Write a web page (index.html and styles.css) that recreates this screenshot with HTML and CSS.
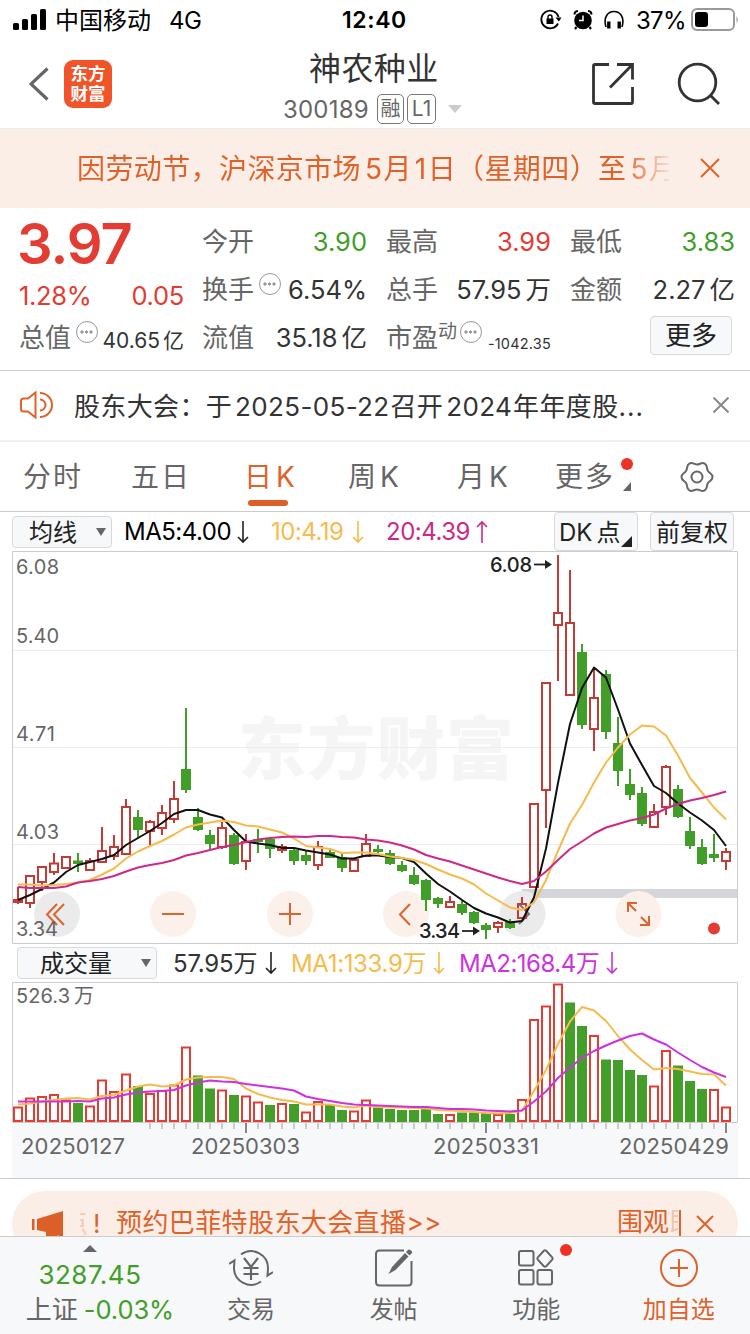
FILE: index.html
```html
<!DOCTYPE html>
<html lang="zh-CN">
<head>
  <meta charset="utf-8">
  <title>神农种业 300189</title>
  <link rel="stylesheet" href="styles.css">
</head>
<body>
  <!-- Status bar -->
  <div class="status-bar">
    <svg class="signal" width="34" height="22" viewBox="0 0 34 22">
      <rect x="0" y="14" width="6" height="7" rx="1.5"/>
      <rect x="9" y="10" width="6" height="11" rx="1.5"/>
      <rect x="18" y="5" width="6" height="16" rx="1.5"/>
      <rect x="27" y="0" width="6" height="21" rx="1.5"/>
    </svg>
    <span class="carrier">中国移动</span>
    <span class="network">4G</span>
    <span class="clock">12:40</span>
    <div class="status-icons">
      <svg width="22" height="22" viewBox="0 0 22 22" fill="none" stroke="#000" stroke-width="1.8">
        <path d="M18 14.5A8.8 8.8 0 1 1 18.6 8"/>
        <path d="M15.5 8.5h6l-2.6 4z" fill="#000" stroke="none"/>
        <rect x="6.5" y="9.5" width="7" height="5.5" fill="#000" stroke="none"/>
        <path d="M8 10V8a2 2 0 0 1 4 0v2" stroke-width="1.4"/>
      </svg>
      <svg width="20" height="22" viewBox="0 0 20 22">
        <circle cx="10" cy="11.5" r="8.8"/>
        <path d="M1.800 5.500Q1 2.500 5 2M18.200 5.500Q19 2.500 15 2M3.500 18L2 20M16.500 18L18 20" fill="none" stroke="#000" stroke-width="2.2"/>
        <path d="M10 6.500V11.500H6" fill="none" stroke="#fff" stroke-width="1.500"/>
      </svg>
      <svg width="20" height="20" viewBox="0 0 20 20" fill="none" stroke="#000">
        <path d="M2 17C-1 7 4 1.500 10 1.500S21 7 18 17" stroke-width="1.600"/>
        <path d="M4.800 11.500v7M15.200 11.500v7" stroke-width="3.400"/>
      </svg>
    </div>
    <span class="battery-text">37%</span>
    <svg class="battery" width="48" height="24" viewBox="0 0 48 24">
      <rect x="1" y="1" width="42" height="21" rx="5" fill="none" stroke="#999" stroke-width="2"/>
      <rect x="4" y="4" width="13" height="15" rx="3"/>
      <path d="M45.500 8q2.500 3.500 0 7z" fill="#999"/>
    </svg>
  </div>

  <!-- Header -->
  <header class="header">
    <svg class="back" width="20" height="34" viewBox="0 0 20 34"><path d="M18.500 1.500L2 17l16.500 15.500" fill="none" stroke="#666" stroke-width="3.200"/></svg>
    <div class="logo"><span>东方</span><span>财富</span></div>
    <div class="stock">
      <h1 class="stock-name">神农种业</h1>
      <div class="stock-sub">
        <span class="stock-code">300189</span>
        <span class="tag">融</span>
        <span class="tag tag-level">L1</span>
        <i class="caret"></i>
      </div>
    </div>
    <svg class="share" width="44" height="44" viewBox="0 0 44 44" fill="none" stroke="#333" stroke-width="2.800">
      <path d="M18 2.500H4Q2.500 2.500 2.500 4V40Q2.500 41.500 4 41.500H40Q41.500 41.500 41.500 40V25M26 2.500H41.500V17.500M41 3L19 25.500"/>
    </svg>
    <svg class="search" width="44" height="44" viewBox="0 0 44 44" fill="none" stroke="#333" stroke-width="2.800">
      <circle cx="20.500" cy="20.500" r="18.300"/><path d="M33.500 33.500L42 42"/>
    </svg>
  </header>

  <!-- Holiday banner -->
  <div class="banner">
    <p class="banner-text">因劳动节，沪深京市场<b>5</b>月<b class="one">1</b>日（星期四）至<b>5</b>月</p>
    <svg class="banner-close" width="20" height="20" viewBox="0 0 20 20"><path d="M1 1l18 18M19 1L1 19" stroke="#e0622a" stroke-width="2"/></svg>
  </div>

  <!-- Quote -->
  <section class="quote">
    <div class="quote-main">
      <div class="price up">3.97</div>
      <div class="change up"><span>1.28%</span><span>0.05</span></div>
      <div class="cell"><span class="label">总值</span><i class="more-dot"></i><span class="value small">40.65<em>亿</em></span></div>
    </div>
    <div class="quote-grid">
      <div class="cell"><span class="label">今开</span><span class="value down">3.90</span></div>
      <div class="cell"><span class="label">最高</span><span class="value up">3.99</span></div>
      <div class="cell"><span class="label">最低</span><span class="value down">3.83</span></div>
      <div class="cell"><span class="label">换手</span><i class="more-dot"></i><span class="value">6.54%</span></div>
      <div class="cell"><span class="label">总手</span><span class="value">57.95<em>万</em></span></div>
      <div class="cell"><span class="label">金额</span><span class="value">2.27<em>亿</em></span></div>
      <div class="cell"><span class="label">流值</span><span class="value">35.18<em>亿</em></span></div>
      <div class="cell"><span class="label">市盈<sup>动</sup></span><i class="more-dot pe-dot"></i><span class="value tiny">-1042.35</span></div>
      <div class="cell cell-btn"><button class="btn btn-more">更多</button></div>
    </div>
  </section>

  <!-- Notice -->
  <div class="notice">
    <svg width="35" height="28" viewBox="0 0 35 28" fill="none" stroke="#e0622a" stroke-width="2">
      <path d="M16.500 1.500V26.500L9 20.500H4.500Q2 20.500 2 18V10Q2 7.500 4.500 7.500H9ZM21 8.500a5.500 5.500 0 0 1 0 11M21 2a12 12 0 0 1 0 24"/>
    </svg>
    <p class="notice-text">股东大会：于<b>2025-05-22</b>召开<b>2024</b>年年度股<span class="dots">...</span></p>
    <svg class="notice-close" width="16" height="16" viewBox="0 0 16 16"><path d="M.5.5l15 15M15.500.5l-15 15" stroke="#888" stroke-width="2"/></svg>
  </div>

  <!-- Period tabs -->
  <nav class="tabs">
    <span class="tab">分时</span>
    <span class="tab">五日</span>
    <span class="tab active">日<b>K</b></span>
    <span class="tab">周<b>K</b></span>
    <span class="tab">月<b>K</b></span>
    <span class="tab tab-more">更多</span>
    <svg width="34" height="32" viewBox="0 0 34 32" fill="none" stroke="#666" stroke-width="2">
      <path d="M32.500 16C32.500 19.500 29.300 19.700 27.800 22.300S27.700 27.600 24.700 29.400S20 28.500 17 28.500S12.300 31.100 9.300 29.400S7.700 24.900 6.200 22.300S1.500 19.500 1.500 16S4.700 12.300 6.200 9.700S6.300 4.400 9.300 2.600S14 3.500 17 3.500S21.700.9 24.700 2.600S26.300 7.100 27.800 9.700S32.500 12.500 32.500 16Z"/>
      <circle cx="17" cy="16" r="5.500"/>
    </svg>
  </nav>

  <!-- Moving averages -->
  <div class="toolbar">
    <button class="btn select">均线<i></i></button>
    <span class="ma ma5">MA5:4.00</span><svg class="arrow" viewBox="0 0 12 24"><path d="M6 1v21M1 17l5 5 5-5"/></svg>
    <span class="ma ma10">10:4.19</span><svg class="arrow ma10" viewBox="0 0 12 24"><path d="M6 1v21M1 17l5 5 5-5"/></svg>
    <span class="ma ma20">20:4.39</span><svg class="arrow ma20" viewBox="0 0 12 24"><path d="M6 23V2M1 7l5-5 5 5"/></svg>
    <button class="btn tool tool-dk"><b>DK</b>点</button>
    <button class="btn tool tool-fq">前复权</button>
  </div>

  <svg class="chart" id="kline" width="726" height="393" viewBox="12 551 726 393">
    <text class="watermark" x="238" y="774" textLength="276">东方财富</text>
    <path class="grid" d="M12 650.500H738M12 747.500H738M12 844.500H738"/>
    <rect x="522" y="889" width="216" height="9" fill="#d5d6db"/>
    <g class="pads">
      <circle class="gray" cx="57" cy="914" r="23"/>
      <circle cx="173" cy="914" r="23"/>
      <circle cx="290" cy="914" r="23"/>
      <circle cx="406" cy="914" r="23"/>
      <circle class="gray" cx="522.500" cy="914" r="23"/>
      <circle cx="638.500" cy="914" r="23"/>
    </g>
    <g class="pad-icons">
      <path d="M57 904L47 914.500L57 925M64 904L54 914.500L64 925M162 914H184M279 914H301M290 903V925M410 904L400 914.500L410 925"/>
      <path d="M637 903H628V912M628.500 903.500L636 911M640 925H649V916M648.500 924.500L641 917"/>
      <path class="dim" d="M519 904L529 914L519 924"/>
    </g>
    <g id="candles"></g>
    <g class="axis-y">
      <text x="16" y="574" textLength="43">6.08</text>
      <text x="16" y="643" textLength="43">5.40</text>
      <text x="16" y="741" textLength="39">4.71</text>
      <text x="16" y="839" textLength="43">4.03</text>
      <text x="16" y="936" textLength="42">3.34</text>
    </g>
    <g class="mark">
      <text x="490" y="572" textLength="42">6.08</text>
      <path d="M534 564.500H550"/><path class="tip" d="M545 560L552 564.500L545 569Z"/>
      <text x="419" y="938" textLength="41">3.34</text>
      <path d="M462 931H478"/><path class="tip" d="M473 926.500L480 931L473 935.500Z"/>
    </g>
    <circle cx="714" cy="928.500" r="6" fill="#e33c32"/>
    <path class="frame" d="M12.500 943.500V551.500H737.500V943.500Z"/>
  </svg>

  <!-- Volume -->
  <div class="toolbar toolbar-vol">
    <button class="btn select select-vol">成交量<i></i></button>
    <span class="ma vol">57.95万</span><svg class="arrow" viewBox="0 0 12 24"><path d="M6 1v21M1 17l5 5 5-5"/></svg>
    <span class="ma vol1">MA1:133.9万</span><svg class="arrow ma10" viewBox="0 0 12 24"><path d="M6 1v21M1 17l5 5 5-5"/></svg>
    <span class="ma vol2">MA2:168.4万</span><svg class="arrow vol2" viewBox="0 0 12 24"><path d="M6 1v21M1 17l5 5 5-5"/></svg>
  </div>

  <svg class="chart" id="volume" width="726" height="196" viewBox="12 982 726 196">
    <rect x="12" y="1122" width="726" height="56" fill="#f7f8fa"/>
    <g id="bars"></g>
    <g class="axis-y">
      <text x="16" y="1003" textLength="54">526.3</text>
      <text x="74" y="1003">万</text>
    </g>
    <path class="frame" d="M12.500 1122.500V982.500H737.500V1122.500Z"/>
    <g id="ticks"></g>
    <g class="axis-x">
      <text x="21" y="1154" textLength="104">20250127</text>
      <text x="191" y="1154" textLength="109">20250303</text>
      <text x="433" y="1154" textLength="106">20250331</text>
      <text x="619" y="1154" textLength="110">20250429</text>
    </g>
  </svg>

  <!-- Promo strip, cut off by the bottom bar -->
  <div class="promo-wrap">
    <div class="promo">
      <svg width="32" height="28" viewBox="0 0 32 28" fill="#dc5f28">
        <path d="M0 9h2.500v11H0zM5 9L31 1V27L26 25.500Q22 28 14 26V22L5 20Z"/>
      </svg>
      <span class="promo-prev">点</span>
      <span class="promo-mark">!</span>
      <span class="promo-text">预约巴菲特股东大会直播<b>&gt;&gt;</b></span>
      <span class="promo-link">围观<i>即</i></span>
      <svg class="promo-close" width="18" height="18" viewBox="0 0 18 18"><path d="M1 1l16 16M17 1L1 17" stroke="#e0622a" stroke-width="2"/></svg>
    </div>
  </div>

  <!-- Bottom bar -->
  <footer class="bottom-bar">
    <div class="index">
      <i class="caret-up"></i>
      <div class="index-value">3287.45</div>
      <div class="index-row">上证<b>-0.03%</b></div>
    </div>
    <div class="action">
      <svg width="44" height="40" viewBox="0 0 44 40" fill="none" stroke="#666" stroke-width="2">
        <path d="M12 6.500A17 17 0 0 1 39 20.500L38.500 27.500L44 24M32 33.500A17 17 0 0 1 5 19.500L5.500 12.500L0 16"/>
        <path d="M15 10l7 9 7-9M22 19v13M14.500 20h15M14.500 26h15" stroke-width="2.200"/>
      </svg>
      <span>交易</span>
    </div>
    <div class="action">
      <svg width="40" height="40" viewBox="0 0 40 40" fill="none" stroke="#666" stroke-width="2">
        <path d="M30 2.500H5.500Q2 2.500 2 6V34Q2 37.500 5.500 37.500H34Q37.500 37.500 37.500 34V13"/>
        <path d="M14.500 26L18 19L31 5L34.500 8.500L21.500 22Z" fill="#666" stroke="none"/>
        <path d="M32 4L34.500 1.500Q38.500 2 38 5L35.500 7.500Z" fill="#666" stroke="none"/>
      </svg>
      <span>发帖</span>
    </div>
    <div class="action action-fn">
      <svg width="40" height="40" viewBox="0 0 40 40" fill="none" stroke="#666" stroke-width="2">
        <rect x="3" y="3" width="14.500" height="14.500" rx="2"/>
        <rect x="3" y="22" width="14.500" height="14.500" rx="2"/>
        <rect x="21.500" y="22" width="14.500" height="14.500" rx="2"/>
        <path d="M27.800 2.800Q29 1.800 30.200 2.800L36.200 9.300Q37.200 10.500 36.200 11.700L30.200 18.200Q29 19.200 27.800 18.200L21.800 11.700Q20.800 10.500 21.800 9.300Z"/>
      </svg>
      <span>功能</span>
    </div>
    <div class="action action-add">
      <svg width="40" height="40" viewBox="0 0 40 40" fill="none" stroke="#e0622a" stroke-width="2">
        <circle cx="20" cy="20" r="18"/><path d="M11 20h18M20 11v18"/>
      </svg>
      <span>加自选</span>
    </div>
  </footer>

  <script src="chart.js"></script>
</body>
</html>
```
FILE: styles.css
```css
* {
  margin: 0;
  padding: 0;
  box-sizing: border-box;
}

body {
  width: 750px;
  height: 1334px;
  overflow: hidden;
  background: #fff;
  color: #333;
  font-family: Inter, "Noto Sans CJK SC", sans-serif;
  font-size: 26px;
  font-weight: 400;
}

svg {
  display: block;
  flex: none;
}

b,
i,
em {
  font-weight: inherit;
  font-style: normal;
}

span,
p {
  white-space: nowrap;
}

.up {
  color: #e33c32;
}

.down {
  color: #419e29;
}

.btn {
  background: #f7f8fa;
  border: 1px solid #d8d9de;
  border-radius: 4px;
  color: #222;
  font-family: inherit;
  white-space: nowrap;
}

/* Status bar */
.status-bar {
  display: flex;
  align-items: center;
  height: 40px;
  padding-left: 13px;
  color: #000;
  font-size: 24px;
}

.carrier {
  margin-left: 8px;
  width: 97px;
  padding-bottom: 3px;
}

.network {
  margin-left: 17px;
  width: 33px;
  letter-spacing: -0.5px;
}

.clock {
  margin-left: 140px;
  width: 66px;
  font-size: 23px;
  font-weight: 600;
  letter-spacing: 0.6px;
}

.status-icons {
  display: flex;
  align-items: center;
  gap: 11px;
  margin-left: 132px;
}

.battery-text {
  margin-left: 12px;
  width: 49px;
  letter-spacing: -0.7px;
}

.battery {
  margin-left: 6px;
}

/* Header */
.header {
  display: flex;
  height: 88px;
  padding-left: 29px;
}

.back {
  margin-top: 27px;
}

.logo {
  display: flex;
  flex-direction: column;
  align-items: center;
  width: 48px;
  height: 48px;
  margin: 20px 0 0 15px;
  padding-top: 4px;
  border-radius: 9px;
  background: #f05428;
  color: #fff;
  font-size: 17.5px;
  font-weight: 700;
  line-height: 20px;
}

.stock {
  width: 190px;
  margin-left: 168px;
}

.stock-name {
  padding-left: 29px;
  font-size: 32px;
  font-weight: 400;
  letter-spacing: 0.4px;
  line-height: 38px;
  margin-top: 10px;
}

.stock-sub {
  display: flex;
  align-items: center;
  height: 32px;
  margin-top: 5px;
  padding-left: 3px;
  color: #666;
}

.stock-code {
  width: 94px;
  font-size: 24px;
  letter-spacing: 0.2px;
}

.tag {
  width: 27px;
  height: 30px;
  margin-right: 3px;
  border: 1px solid #777;
  border-radius: 5px;
  font-size: 20px;
  line-height: 28px;
  text-align: center;
}

.tag-level {
  width: 29px;
  font-size: 21px;
}

.caret {
  margin-left: 9px;
  border: 7px solid transparent;
  border-top: 8px solid #ccc;
  border-bottom: 0;
}

.share {
  margin: 22px 0 0 121px;
}

.search {
  margin: 22px 0 0 42px;
}

/* Banner */
.banner {
  display: flex;
  align-items: center;
  height: 80px;
  padding-left: 77px;
  background: #fbeee7;
  border-top: 1px solid #ebebf0;
}

.banner-text {
  width: 592px;
  padding-bottom: 3px;
  overflow: hidden;
  color: #e0622a;
  font-size: 28px;
  letter-spacing: 0.4px;
  -webkit-mask-image: linear-gradient(to right, #000 545px, transparent 598px);
  mask-image: linear-gradient(to right, #000 545px, transparent 598px);
}

.banner-text b {
  margin: 0 1px 0 4px;
}

.banner-text .one {
  margin: 0 1px 0 3px;
}

.banner-close {
  margin: -1px 0 0 31px;
}

/* Quote */
.quote {
  display: flex;
  height: 163px;
  padding: 9px 0 0 19px;
  border-bottom: 1px solid #ccc;
}

.quote-main {
  width: 165px;
}

.price {
  height: 56px;
  margin-left: -2px;
  font-size: 56px;
  font-weight: 600;
  line-height: 54px;
  letter-spacing: -1px;
}

.change {
  display: flex;
  justify-content: space-between;
  height: 41px;
  font-size: 25.5px;
  line-height: 46px;
  letter-spacing: -0.3px;
}

.quote-grid {
  display: grid;
  grid-template-columns: repeat(3, 165px);
  column-gap: 19px;
  align-content: start;
  margin-left: 18px;
  padding-top: 1px;
}

.cell {
  display: flex;
  height: 48px;
  line-height: 47px;
}

.label {
  color: #666;
}

.label sup {
  font-size: 19px;
  line-height: 0;
  vertical-align: 9px;
}

.value {
  margin-left: auto;
  font-size: 25.5px;
}

.value em {
  margin-left: 4px;
}

.value.small {
  font-size: 21px;
  line-height: 53px;
}

.value.small em {
  margin-left: 3px;
}

.value.tiny {
  font-size: 14.5px;
  line-height: 60px;
  letter-spacing: 0.2px;
}

.more-dot {
  flex: none;
  width: 22px;
  height: 22px;
  margin: 7px 0 0 5px;
  border: 1.5px solid #999;
  border-radius: 50%;
  background:
    radial-gradient(circle at 5px 50%, #999 1.4px, transparent 1.8px),
    radial-gradient(circle at 9.5px 50%, #999 1.4px, transparent 1.8px),
    radial-gradient(circle at 14px 50%, #999 1.4px, transparent 1.8px);
}

.pe-dot {
  margin-left: 3px;
}

.cell-btn {
  padding: 2px 0 0 80px;
}

.btn-more {
  width: 82px;
  height: 39px;
  font-size: 26px;
  line-height: 34px;
}

/* Notice */
.notice {
  display: flex;
  align-items: center;
  height: 71px;
  padding-left: 19px;
  border-bottom: 2px solid #eee;
}

.notice > svg {
  margin-top: -1px;
}

.notice-text {
  width: 600px;
  margin-left: 20px;
  padding-bottom: 3px;
  font-size: 26px;
  letter-spacing: 0.35px;
}

.notice-text b {
  margin: 0 1px 0 3px;
}

.dots {
  letter-spacing: 1px;
}

.notice-close {
  margin-left: 39px;
}

/* Tabs */
.tabs {
  position: relative;
  display: grid;
  grid-template-columns: 108px 113px 104px 109px 98px 125px 34px;
  align-items: center;
  height: 70px;
  padding-left: 23px;
  border-bottom: 1px solid #ccc;
  color: #666;
  font-size: 28px;
}

.tab {
  padding-bottom: 4px;
  letter-spacing: 2px;
}

.tab b {
  margin-left: 2px;
}

.active {
  color: #e0622a;
}

.active::after {
  content: "";
  position: absolute;
  left: 248px;
  bottom: 5px;
  width: 40px;
  height: 6px;
  border-radius: 3px;
  background: #dc5f28;
}

.tab-more {
  position: relative;
}

.tab-more::before {
  content: "";
  position: absolute;
  left: 66px;
  top: 3px;
  width: 12px;
  height: 12px;
  border-radius: 50%;
  background: #ee3124;
}

.tab-more::after {
  content: "";
  position: absolute;
  left: 68px;
  top: 27px;
  border-left: 8px solid transparent;
  border-bottom: 9px solid #666;
}

/* Indicator toolbars */
.toolbar {
  display: flex;
  align-items: center;
  height: 39px;
  padding-left: 12px;
  font-size: 24px;
}

.select {
  display: flex;
  align-items: center;
  width: 100px;
  height: 32px;
  padding: 0 0 3px 16px;
  font-size: 24px;
}

.select i {
  margin: 3px 0 0 19px;
  border: 5px solid transparent;
  border-top: 8px solid #666;
  border-bottom: 0;
}

.select-vol {
  width: 140px;
  padding-left: 22px;
}

.select-vol i {
  margin-left: 29px;
}

.ma {
  width: 113px;
  margin-left: 12px;
  color: #000;
  letter-spacing: -0.5px;
}

.arrow {
  width: 12px;
  height: 24px;
  fill: none;
  stroke: currentColor;
  stroke-width: 1.6;
  color: #222;
}

.ma10,
.vol1 {
  color: #f5bb4c;
}

.ma20 {
  color: #cc2a86;
}

.ma.ma10,
.arrow.ma10,
.ma.vol1 {
  color: #f5bb4c;
}

.ma.ma20,
.arrow.ma20 {
  color: #cc2a86;
}

.ma.ma10 {
  width: 81px;
  margin-left: 22px;
}

.ma.ma20 {
  width: 90px;
  margin-left: 22px;
}

.tool {
  position: relative;
  height: 39px;
  padding-bottom: 2px;
  font-size: 24px;
}

.tool-dk {
  width: 84px;
  margin-left: 66px;
  padding-left: 4px;
  text-align: left;
}

.tool-dk b {
  margin-right: 4px;
}

.tool-dk::after {
  content: "";
  position: absolute;
  right: 5px;
  bottom: 3px;
  border-left: 11px solid transparent;
  border-bottom: 11px solid #222;
}

.tool-fq {
  width: 84px;
  margin-left: 12px;
}

.toolbar-vol {
  height: 38px;
  padding: 0 0 0 17px;
}

.toolbar-vol .ma {
  padding-bottom: 3px;
}

.ma.vol {
  width: 92px;
  margin-left: 16px;
  color: #333;
  letter-spacing: -0.2px;
}

.ma.vol1 {
  width: 142px;
  margin-left: 14px;
  letter-spacing: -0.35px;
}

.ma.vol2 {
  width: 147px;
  margin-left: 14px;
}

.ma.vol2,
.arrow.vol2 {
  color: #cc33dd;
}

/* Charts */
.chart {
  margin-left: 12px;
}

.frame {
  fill: none;
  stroke: #ccc;
}

.grid {
  stroke: #ebebf2;
}

.watermark {
  fill: #f5f5f5;
  font-size: 68px;
  font-weight: 900;
}

.axis-y {
  fill: #666;
  font-size: 20px;
}

.axis-x {
  fill: #666;
  font-size: 22px;
}

.mark {
  fill: #222;
  font-size: 20px;
  font-weight: 500;
}

.mark path {
  stroke: #222;
  stroke-width: 1.8;
}

.mark .tip {
  stroke: none;
}

.pads {
  fill: #fcf0ea;
}

.pads .gray {
  fill: #ebebeb;
}

.pad-icons {
  fill: none;
  stroke: #dc6430;
  stroke-width: 2;
}

.pad-icons .dim {
  stroke: #777;
}

.candle {
  stroke-width: 2;
}

.candle.rise {
  fill: none;
  stroke: #c13c36;
}

.candle.fall {
  fill: #419e29;
  stroke: #419e29;
}

.bar.rise {
  fill: none;
  stroke: #e33c32;
  stroke-width: 2;
}

.bar.fall {
  fill: #439f2a;
}

.line {
  fill: none;
  stroke-width: 2;
  stroke-linejoin: round;
}

.tick {
  stroke: #ccc;
  stroke-width: 2;
}

.tick.major {
  stroke: #888;
}

/* Promo */
.promo-wrap {
  height: 58px;
  padding: 12px 12px 0;
  border-top: 1px solid #ccc;
  overflow: hidden;
}

.promo {
  display: flex;
  align-items: center;
  height: 66px;
  padding-left: 20px;
  border-radius: 33px;
  background: #fbeee7;
  color: #e0622a;
  font-size: 26px;
  line-height: 38px;
}

.promo > svg:first-child {
  margin-top: -1px;
}

.promo-prev {
  display: flex;
  justify-content: flex-end;
  width: 8px;
  margin-left: 16px;
  overflow: hidden;
  opacity: 0.25;
}

.promo-mark {
  width: 8px;
  margin-left: 5px;
}

.promo-text {
  width: 326px;
  margin: -3px 0 0 15px;
  letter-spacing: 0.4px;
}

.promo-link {
  display: flex;
  width: 64px;
  height: 26px;
  margin: -2px 0 0 175px;
  border-right: 2px solid #e0622a;
  line-height: 24px;
  overflow: hidden;
}

.promo-link i {
  width: 9px;
  overflow: hidden;
  opacity: 0.3;
}

.promo-close {
  margin-left: 15px;
}

/* Bottom bar */
.bottom-bar {
  position: relative;
  display: flex;
  height: 98px;
  background: #f7f8fa;
  border-top: 1px solid #ccc;
}

.index {
  width: 180px;
  text-align: center;
}

.caret-up {
  display: block;
  width: 0;
  margin: 8px auto 0;
  border: 7px solid transparent;
  border-bottom: 7px solid #666;
  border-top: 0;
}

.index-value {
  padding-top: 6px;
  color: #419e29;
  line-height: 34px;
  font-size: 26px;
  letter-spacing: 0.5px;
}

.index-row {
  padding-left: 20px;
  color: #666;
  line-height: 35px;
  white-space: nowrap;
}

.index-row b {
  margin-left: 6px;
  color: #419e29;
  font-size: 25.5px;
  letter-spacing: -0.1px;
}

.action {
  position: relative;
  display: flex;
  flex-direction: column;
  align-items: center;
  width: 142.7px;
  padding-top: 11px;
  color: #666;
  font-size: 24px;
  line-height: 43px;
}

.action-fn::after {
  content: "";
  position: absolute;
  left: 95px;
  top: 7px;
  width: 12px;
  height: 12px;
  border-radius: 50%;
  background: #ee3124;
}

.action-add {
  color: #e0622a;
}
```
FILE: chart.js
```js
const SVG = 'http://www.w3.org/2000/svg';
const STEP = 12;
const X0 = 18;

// [rise?, high, body top, body bottom, low]
const candles = [
  [1, 887, 900, 902, 904], [1, 875, 876, 903, 908], [1, 866, 867, 882, 891], [1, 853, 863.5, 872, 875],
  [1, 856, 857, 868, 869], [0, 853, 861.5, 863, 872], [1, 858, 861, 870, 870], [1, 827, 851, 862, 863],
  [1, 835, 847, 856, 860], [1, 799, 807, 854, 855], [0, 810, 818, 829, 838], [1, 820, 822, 831, 845],
  [1, 805, 813, 828, 835], [1, 781, 799, 819, 823], [0, 708, 770, 789, 793], [0, 808, 818, 829, 831],
  [0, 830, 836, 843, 849], [1, 822, 828, 847, 849], [0, 833, 836, 863, 865], [1, 834, 842, 861, 870],
  [0, 829, 840, 841, 853], [0, 838, 840, 848, 858], [1, 844, 847, 850, 853], [0, 849, 851, 860, 865],
  [0, 851, 856, 860, 865], [1, 841, 847, 865, 870], [0, 848, 853, 857, 858], [0, 854, 858, 867, 872],
  [1, 858, 860, 871, 872], [1, 834, 844, 856, 857], [0, 845, 850, 851, 854], [0, 850, 854, 863, 865],
  [0, 861, 866, 870, 872], [0, 867, 876, 883, 885], [0, 879, 881, 899, 911], [0, 897, 899, 903, 908],
  [1, 896, 902, 907, 908], [0, 901, 905, 912, 915], [0, 911, 913, 922, 924], [0, 923, 926, 929, 939],
  [1, 921, 923, 927, 933], [0, 919, 922, 927, 929], [1, 897, 904, 918, 919], [1, 803, 804, 887, 888],
  [1, 682, 683, 790, 828], [1, 555, 613, 625, 681], [1, 570, 623, 695, 696], [0, 644, 653, 724, 729],
  [1, 668, 698, 729, 751], [0, 670, 675, 731, 739], [0, 717, 744, 770, 786], [0, 769, 785, 794, 800],
  [0, 787, 794, 823, 826], [1, 804, 812, 827, 828], [1, 765, 767, 807, 815], [0, 785, 790, 816, 818],
  [0, 817, 832, 845, 849], [0, 839, 848, 863, 865], [0, 834, 855, 857, 862], [1, 848, 852, 861, 870]
];

const ma5 = [900, 895, 889, 882.5, 872, 865, 862, 859, 855, 845, 838, 831, 823, 814, 810, 810, 814.5, 817.5, 830, 841.5,
  843.5, 845, 848, 848, 850.5, 852.5, 854.5, 858.5, 858.5, 855.5, 855.5, 857, 858, 862, 873.5, 884, 891.5, 900, 908, 913.5,
  917.5, 922.5, 921, 897.5, 848.5, 783, 724, 688, 667.5, 677.5, 709.5, 743.5, 765, 786, 793, 803.5, 812.5, 820.5, 830, 846];
const ma10 = [884.5, 884.5, 885.5, 885, 884, 882.5, 880, 874.5, 868.5, 858.5, 851.5, 846, 841, 834.5, 827.5, 824.5, 822.5, 820.5, 822, 825.5,
  826.5, 829.5, 832.5, 838.5, 846, 847.5, 849, 853, 852.5, 852.5, 854, 856.5, 858, 860, 864, 869.5, 874.5, 878.5, 884.5, 893.5,
  900.5, 907.5, 910, 902.5, 880, 851, 823.5, 805, 782.5, 762.5, 747.5, 734.5, 725.5, 726.5, 735.5, 755.5, 778, 792.5, 807.5, 819.5];
const ma20 = [887, 888, 888, 888, 886.5, 882.5, 881, 879, 876, 871.5, 867.5, 865, 863, 860, 855.5, 853, 850, 847, 845, 842,
  839.5, 838, 837, 836.5, 837, 836, 836, 837, 837.5, 839.5, 840.5, 842.5, 845.5, 849.5, 855, 858.5, 861.5, 865.5, 869.5, 873.5,
  877.5, 881, 884, 881, 871.5, 860, 849, 841.5, 833.5, 827.5, 824, 820.5, 818, 814.5, 808.5, 804, 800.5, 798, 795, 791.5];

const volume = [1106.5, 1097.5, 1096, 1094, 1099.5, 1103, 1105.5, 1079.5, 1091, 1073.5, 1086, 1093, 1090, 1084.5, 1046.5, 1075.5, 1088.5, 1089.5, 1095, 1095.5,
  1101.5, 1105, 1103, 1104, 1111.5, 1101, 1105, 1110, 1110.5, 1099.5, 1107.5, 1109, 1110, 1110, 1108.5, 1114, 1114, 1112.5, 1112.5, 1113,
  1114, 1114, 1099, 1019, 1005.5, 983.5, 1002.5, 1026, 1035, 1059.5, 1060, 1070, 1075, 1085.5, 1050, 1065.5, 1081, 1089, 1089, 1106.5];
// 1 = red bar, 0 = green bar
const volumeRise = '111110111101111001011010110011000000100010111100100001100011';
const vma1 = [1104.5, 1103.5, 1101.5, 1100, 1098.5, 1098, 1099.5, 1096, 1095, 1090.5, 1086.5, 1084.5, 1086.5, 1085.5, 1079.5, 1077.5, 1077, 1077, 1079, 1088.5,
  1094, 1097.5, 1100, 1101.5, 1104.5, 1104.5, 1104.5, 1106.5, 1107.5, 1105.5, 1107, 1107.5, 1107.5, 1108, 1108.5, 1110, 1110.5, 1111, 1112, 1113,
  1113.5, 1113, 1110.5, 1091, 1070, 1044, 1021.5, 1007, 1010.5, 1021, 1036, 1049.5, 1060, 1069.5, 1068, 1069, 1071.5, 1074, 1074.5, 1085.5];
const vma2 = [1101.5, 1101.5, 1101.5, 1101.5, 1101.5, 1101, 1101.5, 1098.5, 1097.5, 1094.5, 1092.5, 1091.5, 1091, 1090, 1085.5, 1082.5, 1080.5, 1081.5, 1082, 1084,
  1085.5, 1087, 1088.5, 1090.5, 1096.5, 1099, 1101, 1103, 1104.5, 1105, 1105.5, 1106, 1106.5, 1107, 1107, 1108, 1109, 1109, 1109.5, 1110.5,
  1111, 1111.5, 1110.5, 1101.5, 1091.5, 1078, 1067.5, 1058, 1051, 1045.5, 1040.5, 1036, 1033.5, 1039.5, 1044.5, 1052.5, 1060, 1067, 1072.5, 1077];

function add(parent, d, cls, stroke) {
  const p = document.createElementNS(SVG, 'path');
  p.setAttribute('d', d);
  p.setAttribute('class', cls);
  if (stroke) p.setAttribute('stroke', stroke);
  parent.appendChild(p);
}

function line(parent, ys, color) {
  add(parent, 'M' + ys.map((y, i) => (X0 + i * STEP) + ' ' + y).join('L'), 'line', color);
}

const price = document.getElementById('candles');
candles.forEach(([rise, high, top, bottom, low], i) => {
  const x = X0 + i * STEP;
  const left = i === 0 ? x - 6 : x - 4;
  add(price, `M${x} ${high}V${top}M${x} ${bottom}V${low}M${left} ${top}H${x + 4}V${bottom}H${left}Z`, 'candle ' + (rise ? 'rise' : 'fall'));
});
line(price, ma5, '#111');
line(price, ma10, '#f5bb4c');
line(price, ma20, '#cc2a86');

const bars = document.getElementById('bars');
volume.forEach((y, i) => {
  const x = X0 + i * STEP;
  if (volumeRise[i] === '1') {
    add(bars, `M${x - 4} ${y + 1}H${x + 4}V1121H${x - 4}Z`, 'bar rise');
  } else {
    add(bars, `M${x - 5} ${y}H${x + 5}V1122H${x - 5}Z`, 'bar fall');
  }
});
line(bars, vma1, '#f5bb4c');
line(bars, vma2, '#cc33dd');

const ticks = document.getElementById('ticks');
for (let i = 11; i < 60; i++) {
  const major = i === 19 || i === 39 || i === 59;
  add(ticks, `M${X0 + i * STEP} 1123V${major ? 1133 : 1129}`, major ? 'tick major' : 'tick');
}
```
